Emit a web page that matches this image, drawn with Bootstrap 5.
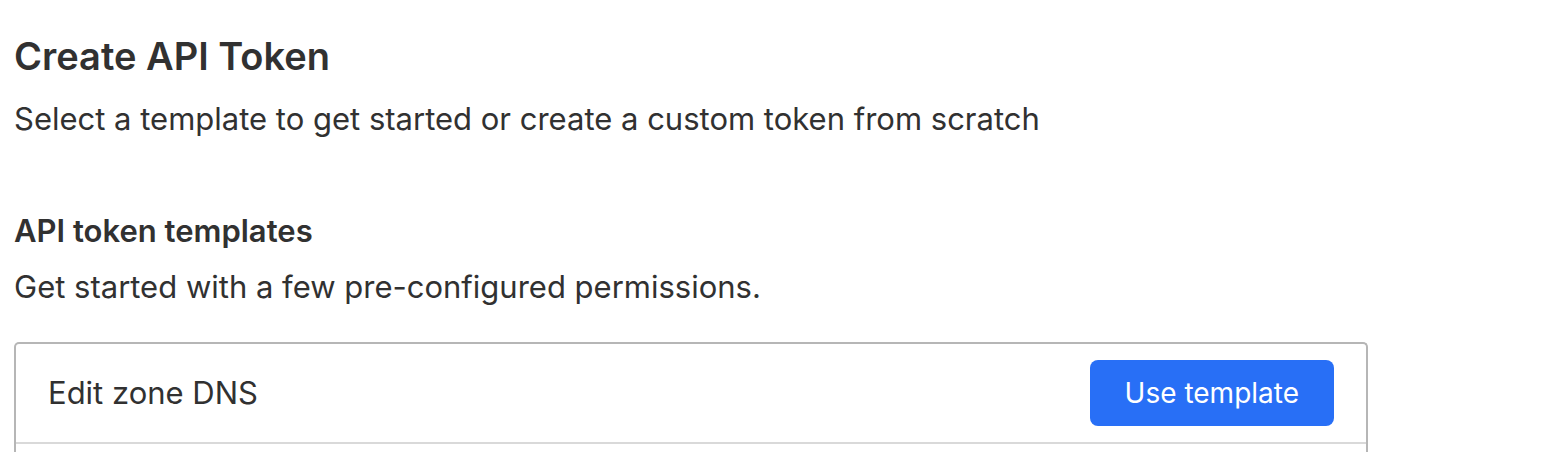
<!DOCTYPE html>
<html lang="en">
<head>
<meta charset="utf-8">
<meta name="viewport" content="width=device-width, initial-scale=1">
<title>Create API Token</title>
<link href="https://cdn.jsdelivr.net/npm/bootstrap@5.3.0/dist/css/bootstrap.min.css" rel="stylesheet">
<style>
body { font-family: Inter, "Liberation Sans", sans-serif; color: #313131; font-size: 31px; line-height: 48px; }
.page-main { padding: 31px 174px 0 14px; }
.page-title { font-size: 38px; line-height: 50px; font-weight: 600; margin-bottom: 14px; }
.page-header { margin-bottom: 68px; }
.section-title { font-size: 31px; line-height: 40px; font-weight: 600; margin-bottom: 12px; }
.section-lead { margin-bottom: 31px; }
.template-list { --bs-list-group-bg: transparent; --bs-list-group-border-color: #d9d9d9; --bs-list-group-border-width: 2px; --bs-list-group-color: #313131; border: 2px solid #b6b6b6; border-bottom: 0; border-radius: 5px 5px 0 0; }
.template-list > .template-row { padding: 16px 32px; border-width: 0 0 2px; }
.btn-template { --bs-btn-bg: #286ff6; --bs-btn-color: #fff; --bs-btn-hover-bg: #1d5fe0; --bs-btn-hover-color: #fff; --bs-btn-font-size: 28px; --bs-btn-line-height: 40px; --bs-btn-padding-x: 35px; --bs-btn-padding-y: 13px; --bs-btn-border-width: 0; --bs-btn-border-radius: 8px; }
</style>
</head>
<body>
<main class="page-main">
<header class="page-header">
<h1 class="page-title">Create API Token</h1>
<p class="mb-0">Select a template to get started or create a custom token from scratch</p>
</header>
<section>
<h2 class="section-title">API token templates</h2>
<p class="section-lead">Get started with a few pre-configured permissions.</p>
<ul class="list-group list-group-flush template-list mb-0">
<li class="list-group-item template-row d-flex align-items-center justify-content-between"><span>Edit zone DNS</span><button type="button" class="btn btn-template">Use template</button></li>
<li class="list-group-item border-0 p-0 pb-2"></li>
</ul>
</section>
</main>
<script src="https://cdn.jsdelivr.net/npm/bootstrap@5.3.0/dist/js/bootstrap.bundle.min.js"></script>
</body>
</html>
